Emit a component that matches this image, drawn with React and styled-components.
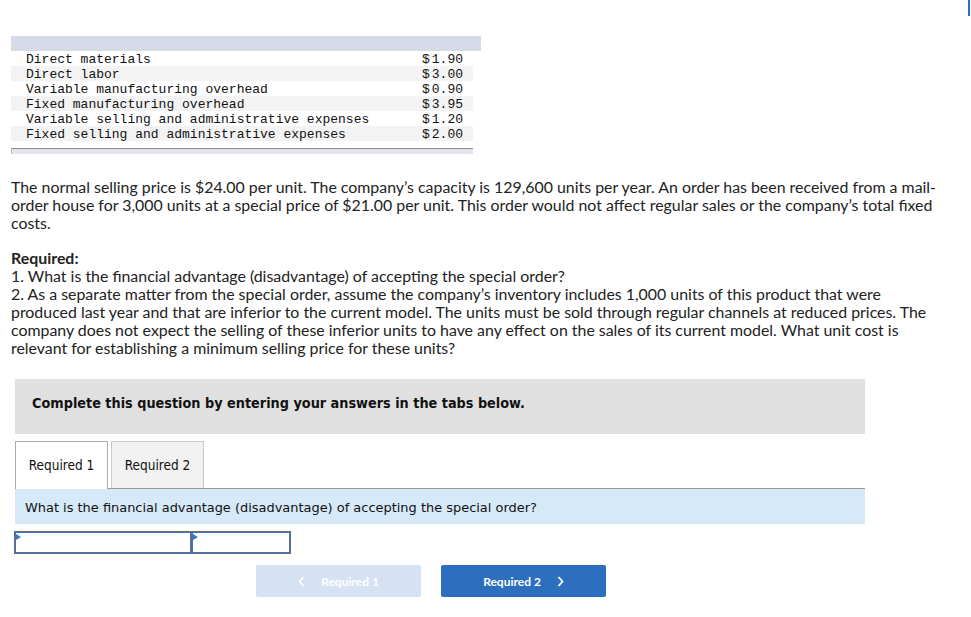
import React from "react";
import styled, { createGlobalStyle } from "styled-components";

const Global = createGlobalStyle`
  html, body { margin: 0; padding: 0; background: #fff; }
  body { font-family: "Lato", "Open Sans", sans-serif; color: #222; }
`;

const Page = styled.div`
  padding: 36px 0 0 11px;
  width: 938px;
`;

const CornerMark = styled.div`
  position: fixed;
  top: 0;
  right: 1px;
  width: 2px;
  height: 16px;
  background: #2f6fbf;
`;

const CostTable = styled.div`
  width: 470px;
  font-family: "Liberation Mono", "Courier New", monospace;
  font-size: 13px;
  line-height: 17px;
  color: #111;
`;

const TableHead = styled.div`
  height: 15px;
  background: #d7dbe8;
`;

const Row = styled.div`
  width: 462px;
  display: flex;
  justify-content: space-between;
  height: 15px;
  padding: 0 10px 0 15px;
  box-sizing: border-box;
  background: ${(p) => (p.$alt ? "#f3f3f3" : "#fff")};
`;

const Money = styled.span`
  display: flex;
  gap: 2px;
`;

const TableFoot = styled.div`
  width: 461px;
  height: 5px;
  margin-top: 7px;
  border-top: 1px solid #8f8f8f;
  border-left: 1px solid #b8b8b8;
  background: #e2e5ee;
`;

const Para = styled.p`
  margin: 24px 0 0;
  font-size: 15.9px;
  line-height: 18px;
  color: #222;
`;

const ReqBlock = styled.div`
  margin-top: 17px;
  font-size: 15.9px;
  line-height: 18px;
  color: #222;
`;

const ReqTitle = styled.div`
  font-weight: 700;
`;

const Instruction = styled.div`
  margin: 22px 0 0 4px;
  width: 850px;
  height: 55px;
  background: #e0e0e0;
  display: flex;
  align-items: center;
  padding: 0 0 8px 17px;
  box-sizing: border-box;
  font-family: "DejaVu Sans Condensed", "DejaVu Sans", sans-serif;
  font-weight: 700;
  font-size: 14.3px;
  color: #111;
`;

const Tabs = styled.div`
  margin: 7px 0 0 4px;
  width: 850px;
  display: flex;
  gap: 3px;
  border-bottom: 1px solid #9a9a9a;
  height: 47px;
  align-items: flex-end;
`;

const Tab = styled.div`
  box-sizing: border-box;
  width: 93px;
  border: 1px solid ${(p) => (p.$active ? "#a9a9a9" : "#c8c8c8")};
  border-bottom: none;
  background: ${(p) => (p.$active ? "#fff" : "#f2f2f2")};
  margin-bottom: ${(p) => (p.$active ? "-1px" : "0")};
  height: ${(p) => (p.$active ? "48px" : "47px")};
  display: flex;
  align-items: center;
  justify-content: center;
  padding-bottom: ${(p) => (p.$active ? "1px" : "0")};
  font-family: "DejaVu Sans Condensed", "DejaVu Sans", sans-serif;
  font-size: 13.5px;
  color: #111;
`;

const Panel = styled.div`
  margin-left: 4px;
  width: 850px;
  height: 35px;
  background: #d6e9f8;
  display: flex;
  align-items: center;
  padding: 1px 0 0 10px;
  box-sizing: border-box;
  font-family: "DejaVu Sans", sans-serif;
  font-size: 12.95px;
  color: #111;
`;

const InputRow = styled.div`
  margin: 7px 0 0 3px;
  width: 277px;
  height: 23px;
  box-sizing: border-box;
  border: 1px solid #6b6b6b;
  background: #6b6b6b;
  display: flex;
  gap: 1px;
`;

const Cell = styled.div`
  position: relative;
  flex: ${(p) => p.$grow};
  background: #fff;
  border: 1px solid #3d75bd;
  &::before {
    content: "";
    position: absolute;
    left: 0;
    top: 1px;
    border-left: 5px solid #3d75bd;
    border-top: 3px solid transparent;
    border-bottom: 3px solid transparent;
  }
`;

const NavRow = styled.div`
  margin: 11px 0 0 245px;
  display: flex;
  gap: 20px;
`;

const NavButton = styled.div`
  width: 165px;
  height: 32px;
  border-radius: 2px;
  background: ${(p) => (p.$disabled ? "#d5e2f3" : "#2c6fbf")};
  color: #fff;
  display: flex;
  align-items: center;
  justify-content: center;
  gap: 16px;
  font-family: "Lato", sans-serif;
  font-weight: 700;
  font-size: 12px;
`;

const Chevron = ({ dir }) => (
  <svg width="7" height="11" viewBox="0 0 7 11" fill="none">
    <path
      d={dir === "left" ? "M5.5 1 L1.5 5.5 L5.5 10" : "M1.5 1 L5.5 5.5 L1.5 10"}
      stroke="#fff"
      strokeWidth="1.8"
    />
  </svg>
);

const costs = [
  ["Direct materials", "1.90"],
  ["Direct labor", "3.00"],
  ["Variable manufacturing overhead", "0.90"],
  ["Fixed manufacturing overhead", "3.95"],
  ["Variable selling and administrative expenses", "1.20"],
  ["Fixed selling and administrative expenses", "2.00"],
];

export default function App() {
  return (
    <Page>
      <Global />
      <CornerMark />
      <CostTable>
        <TableHead />
        {costs.map(([label, v], i) => (
          <Row key={label} $alt={i % 2 === 1}>
            <span>{label}</span>
            <Money>
              <span>$</span>
              <span>{v}</span>
            </Money>
          </Row>
        ))}
        <TableFoot />
      </CostTable>

      <Para>
        The normal selling price is $24.00 per unit. The company’s capacity is 129,600 units per year. An order has been received from a mail-order house for 3,000 units at a special price of $21.00 per unit. This order would not affect regular sales or the company’s total fixed costs.
      </Para>

      <ReqBlock>
        <ReqTitle>Required:</ReqTitle>
        <div>1. What is the financial advantage (disadvantage) of accepting the special order?</div>
        <div>
          2. As a separate matter from the special order, assume the company’s inventory includes 1,000 units of this product that were produced last year and that are inferior to the current model. The units must be sold through regular channels at reduced prices. The company does not expect the selling of these inferior units to have any effect on the sales of its current model. What unit cost is relevant for establishing a minimum selling price for these units?
        </div>
      </ReqBlock>

      <Instruction>Complete this question by entering your answers in the tabs below.</Instruction>

      <Tabs>
        <Tab $active>Required 1</Tab>
        <Tab>Required 2</Tab>
      </Tabs>
      <Panel>What is the financial advantage (disadvantage) of accepting the special order?</Panel>

      <InputRow>
        <Cell $grow="175" />
        <Cell $grow="97" />
      </InputRow>

      <NavRow>
        <NavButton $disabled>
          <Chevron dir="left" />
          <span>Required 1</span>
        </NavButton>
        <NavButton>
          <span>Required 2</span>
          <Chevron dir="right" />
        </NavButton>
      </NavRow>
    </Page>
  );
}
